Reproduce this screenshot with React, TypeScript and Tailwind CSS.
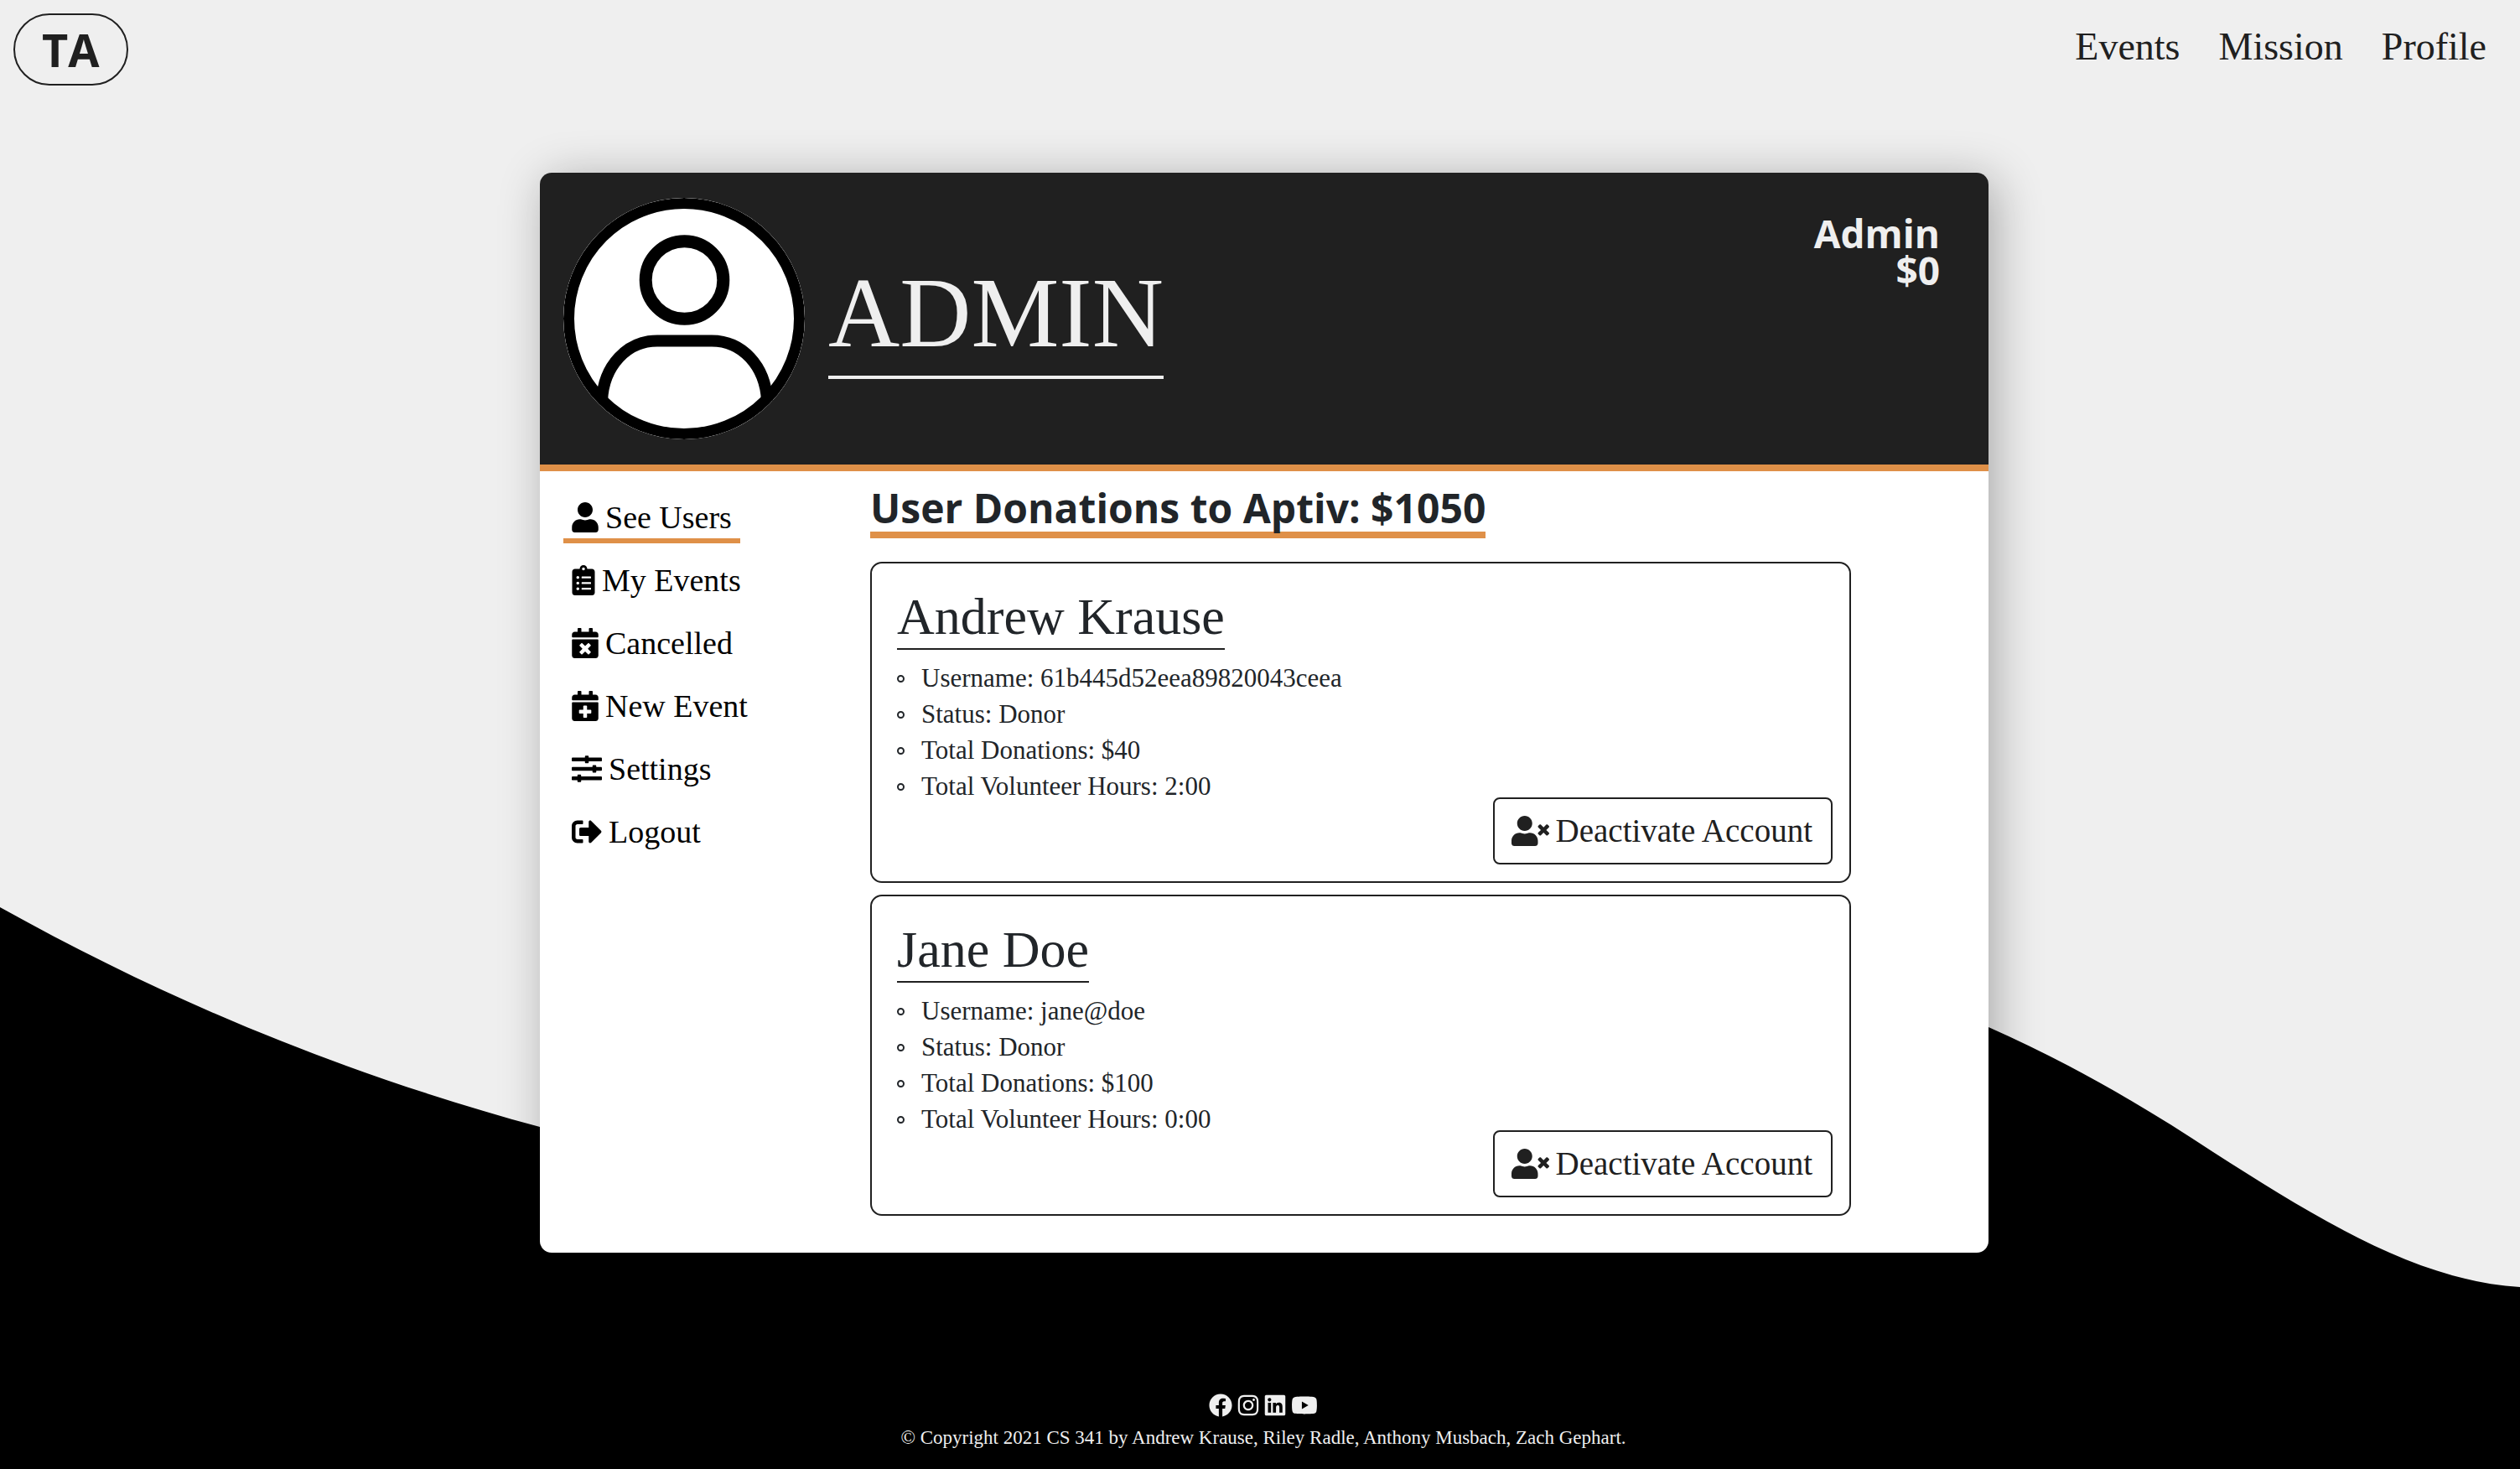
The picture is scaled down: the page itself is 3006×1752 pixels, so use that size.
import type { ReactNode } from "react";
import {
  FaCalendarPlus,
  FaCalendarTimes,
  FaClipboardList,
  FaFacebook,
  FaInstagram,
  FaLinkedin,
  FaSignOutAlt,
  FaSlidersH,
  FaUser,
  FaUserTimes,
  FaYoutube,
} from "react-icons/fa";

type Member = {
  name: string;
  username: string;
  status: string;
  donations: string;
  hours: string;
};

const members: Member[] = [
  {
    name: "Andrew Krause",
    username: "61b445d52eea89820043ceea",
    status: "Donor",
    donations: "$40",
    hours: "2:00",
  },
  {
    name: "Jane Doe",
    username: "jane@doe",
    status: "Donor",
    donations: "$100",
    hours: "0:00",
  },
];

function Wave() {
  return (
    <svg
      className="absolute inset-x-0 bottom-0 h-auto w-full"
      viewBox="0 1082 3006 670"
      aria-hidden="true"
    >
      <path d="M0 1082C215 1202 429 1286 644 1344C1300 1510 1900 1000 2372 1225C2461 1264 2551 1315 2640 1374C2762 1452 2884 1528 3006 1535V1752H0Z" />
    </svg>
  );
}

function Avatar() {
  return (
    <svg
      className="size-72 shrink-0 rounded-full bg-white"
      viewBox="0 0 288 288"
      fill="none"
      stroke="black"
      role="img"
      aria-label="Profile picture"
    >
      <circle cx="144" cy="144" r="137.5" strokeWidth="13" />
      <circle cx="144.5" cy="98" r="46.3" strokeWidth="15" />
      <path
        d="M46 242C48 200 76 170.5 112 170.5H177C213 170.5 241 200 243 242"
        strokeWidth="14"
      />
    </svg>
  );
}

function SideLink({
  icon,
  label,
  active = false,
}: {
  icon: ReactNode;
  label: string;
  active?: boolean;
}) {
  return (
    <a
      href="#"
      aria-current={active ? "page" : undefined}
      className={
        active
          ? "flex items-center gap-2 border-b-6 border-[#df9048] px-2.5 text-[38px] leading-[50px] text-black"
          : "flex items-center gap-2 border-b-6 border-transparent px-2.5 text-[38px] leading-[50px] text-black"
      }
    >
      {icon}
      {label}
    </a>
  );
}

function Detail({ children }: { children: ReactNode }) {
  return (
    <li className="flex items-center gap-5 before:mt-0.5 before:size-[9px] before:rounded-full before:border-2 before:border-[#212529]">
      {children}
    </li>
  );
}

function MemberCard({ member }: { member: Member }) {
  return (
    <article className="rounded-[14px] border-2 border-[#202020] pt-[26px] pr-5 pb-5 pl-[30px]">
      <h3 className="w-fit border-b-2 border-[#202020] text-[62px] leading-[75px]">
        {member.name}
      </h3>
      <div className="flex items-start justify-between pt-3">
        <ul className="text-[31px] leading-[43px]">
          <Detail>Username: {member.username}</Detail>
          <Detail>Status: {member.status}</Detail>
          <Detail>Total Donations: {member.donations}</Detail>
          <Detail>Total Volunteer Hours: {member.hours}</Detail>
        </ul>
        <button
          type="button"
          className="mt-[164px] flex h-20 shrink-0 items-center gap-2 rounded-lg border-2 border-[#202020] pr-[22px] pl-5 text-[39px] leading-[50px] text-[#202020]"
        >
          <FaUserTimes className="h-9 w-[45px]" />
          Deactivate Account
        </button>
      </div>
    </article>
  );
}

export default function App() {
  return (
    <div className="relative flex min-h-screen flex-col bg-[#efefef] font-['Source_Serif_Pro','Liberation_Serif',serif] text-[#212529]">
      <Wave />

      <header className="relative flex items-start justify-between pt-4 pr-10 pl-4">
        <a
          href="#"
          className="rounded-full border-2 border-[#202020] px-8 font-['Open_Sans',sans-serif] text-[54px] leading-[82px] font-bold text-[#202020]"
        >
          TA
        </a>
        <nav className="flex gap-[46px] pt-3 text-[46px] leading-[56px] text-[#202020]">
          <a href="#">Events</a>
          <a href="#">Mission</a>
          <a href="#">Profile</a>
        </nav>
      </header>

      <main className="relative mt-[104px] pl-2.5">
        <section className="mx-auto w-full max-w-[1728px] rounded-[14px] bg-white shadow-[8px_8px_56px_rgba(0,0,0,0.3)]">
          <div className="flex items-start gap-7 rounded-t-[14px] border-b-8 border-[#df9048] bg-[#202020] py-[30px] pr-[58px] pl-7 text-[#efefef]">
            <Avatar />
            <h1 className="mt-16 border-b-4 border-[#efefef] text-[118px] leading-[148px]">
              ADMIN
            </h1>
            <p className="mt-5 ml-auto text-right font-['Open_Sans',sans-serif] text-[46px] leading-[44px] font-bold">
              Admin
              <br />
              $0
            </p>
          </div>

          <div className="flex pr-[164px] pb-11 pl-7">
            <nav className="flex w-[366px] shrink-0 flex-col items-start gap-[19px] pt-[30px]">
              <SideLink active icon={<FaUser className="h-9 w-8" />} label="See Users" />
              <SideLink icon={<FaClipboardList className="h-9 w-7" />} label="My Events" />
              <SideLink icon={<FaCalendarTimes className="h-9 w-8" />} label="Cancelled" />
              <SideLink icon={<FaCalendarPlus className="h-9 w-8" />} label="New Event" />
              <SideLink icon={<FaSlidersH className="size-9" />} label="Settings" />
              <SideLink icon={<FaSignOutAlt className="size-9" />} label="Logout" />
            </nav>

            <div className="min-w-0 flex-1 pt-4">
              <h2 className="w-fit border-b-8 border-[#df9048] font-['Open_Sans',sans-serif] text-[48px] leading-[56px] font-bold">
                User Donations to Aptiv: $1050
              </h2>
              <div className="mt-7 flex flex-col gap-3.5">
                {members.map((member) => (
                  <MemberCard key={member.username} member={member} />
                ))}
              </div>
            </div>
          </div>
        </section>
      </main>

      <footer className="relative mt-auto flex flex-col items-center gap-2 pb-5 pl-2 text-[#efefef]">
        <div className="flex gap-1.5">
          <a href="#" aria-label="Facebook">
            <FaFacebook className="size-7" />
          </a>
          <a href="#" aria-label="Instagram">
            <FaInstagram className="h-7 w-[26px]" />
          </a>
          <a href="#" aria-label="LinkedIn">
            <FaLinkedin className="h-7 w-[26px]" />
          </a>
          <a href="#" aria-label="YouTube">
            <FaYoutube className="h-7 w-8" />
          </a>
        </div>
        <p className="text-[23px] leading-[34px]">
          © Copyright 2021 CS 341 by Andrew Krause, Riley Radle, Anthony Musbach, Zach Gephart.
        </p>
      </footer>
    </div>
  );
}
